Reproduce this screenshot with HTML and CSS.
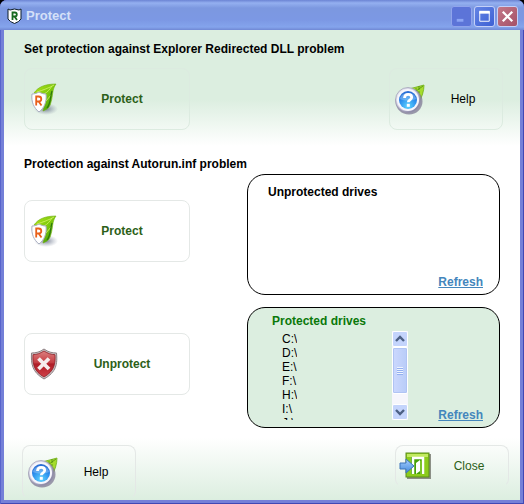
FILE: index.html
```html
<!DOCTYPE html>
<html lang="en">
<head>
  <meta charset="UTF-8">
  <title>Protect</title>
  <meta name="viewport" content="width=device-width, initial-scale=1.0">
  <link rel="stylesheet" href="styles.css">
</head>
<body>
  <!-- shared icons -->
  <svg class="sprite" aria-hidden="true">
    <defs>
      <linearGradient id="leaf" x1="0" y1="0" x2="1" y2="1">
        <stop offset="0" stop-color="#b4e61e"/>
        <stop offset="0.5" stop-color="#7cc80c"/>
        <stop offset="1" stop-color="#2f8a08"/>
      </linearGradient>
      <linearGradient id="ring" x1="0" y1="0" x2="1" y2="1">
        <stop offset="0" stop-color="#f4f4fb"/>
        <stop offset="0.5" stop-color="#c3c2d8"/>
        <stop offset="1" stop-color="#6f6a8c"/>
      </linearGradient>
      <radialGradient id="ball" cx="0.5" cy="0.85" r="0.85">
        <stop offset="0" stop-color="#5cd4ff"/>
        <stop offset="0.6" stop-color="#2a8cec"/>
        <stop offset="1" stop-color="#2a68d0"/>
      </radialGradient>
      <radialGradient id="shade">
        <stop offset="0" stop-color="#5f6a80" stop-opacity="0.8"/>
        <stop offset="1" stop-color="#8a94a8" stop-opacity="0"/>
      </radialGradient>
      <linearGradient id="red" x1="0" y1="0" x2="0" y2="1">
        <stop offset="0" stop-color="#dc8080"/>
        <stop offset="0.45" stop-color="#c43c42"/>
        <stop offset="0.5" stop-color="#ae1c26"/>
        <stop offset="1" stop-color="#cf4048"/>
      </linearGradient>
      <linearGradient id="arrow" x1="0" y1="0" x2="0" y2="1">
        <stop offset="0" stop-color="#a8d0ff"/>
        <stop offset="1" stop-color="#4288dc"/>
      </linearGradient>
    </defs>
    <symbol id="icon-protect" viewBox="0 0 32 36">
      <ellipse cx="17" cy="28" rx="12" ry="6" fill="url(#shade)"/>
      <path d="M5 12C9 6 16 3 27 3c-4 5-3 12-5 18-1 5-3 7-8 9 2-6 2-10 0-16z" fill="url(#leaf)" stroke="#6fac12" stroke-width="0.6"/>
      <path d="M8 11C14 9 20 7 25 4M15 13c4-2 6-5 8-8M17 20l5-6" stroke="#d5f26a" stroke-width="0.8" fill="none"/>
      <path d="M18 27c4-5 3-11 5-17" stroke="#2b780c" stroke-width="1.200" fill="none"/>
      <path d="M3 13c3 0 5-1 7-2 2 1 4 2 7 2 1 8-2 14-7 18-5-4-8-10-7-18z" fill="#fff" stroke="#a9aec0" stroke-width="1"/>
      <path d="M7.200 24.500v-9h2.300q2.800 0 2.800 2.500t-2.800 2.500H7.200M9.700 20.500l2.800 4" fill="none" stroke="#e8601a" stroke-width="1.800"/>
    </symbol>
    <symbol id="icon-help" viewBox="0 0 32 36">
      <path d="M15 8L30 4c0 6-2 12-5 17z" fill="#a5dc2c" stroke="#6fae18" stroke-width="0.8"/>
      <path d="M18 13L29 5M22 7v4h4M25 5v4" stroke="#4f8d10" stroke-width="0.8" fill="none"/>
      <ellipse cx="15" cy="20.500" rx="13.500" ry="13" fill="#77708f" opacity="0.7"/>
      <circle cx="14" cy="19" r="12.500" fill="url(#ring)" stroke="#8e8ba8" stroke-width="0.6"/>
      <circle cx="14" cy="19" r="11" fill="#f6f6fc"/>
      <circle cx="14" cy="19" r="9" fill="url(#ball)"/>
      <path d="M6 18c1-8 15-8 16 0-5 2-11 2-16 0z" fill="#fff" opacity="0.25"/>
      <path d="M10.500 17q.2-3.700 3.700-3.700t3.500 3q0 1.700-1.800 2.700-1.600.8-1.600 2.300" fill="none" stroke="#fff" stroke-width="2.800"/>
      <rect x="12.800" y="22.800" width="3" height="3" fill="#fff"/>
    </symbol>
    <symbol id="icon-unprotect" viewBox="0 0 32 36">
      <path d="M15 3c4 3 8 4 12.500 4 1 11 0 19-12.500 26C3 26 2 18 2.500 7 7 7 11 6 15 3z" fill="#c9c4c6" stroke="#8d7f82" stroke-width="1"/>
      <path d="M15 5c4 2.500 7 3.500 11 3.700.6 9.300-.8 16.500-11 22.300C4.800 25.200 3.500 18 4 8.700 8 8.500 11 7.500 15 5z" fill="url(#red)" stroke="#8f1a22" stroke-width="0.8"/>
      <path d="M9.500 12.500l10.500 10.500M20 12.500L9.500 23" stroke="#f6eeee" stroke-width="3.800"/>
    </symbol>
    <symbol id="icon-close" viewBox="0 0 36 32">
      <rect x="9" y="4" width="24" height="25" fill="#73756c" opacity="0.8"/>
      <rect x="8" y="3" width="23" height="24" fill="#8ccc1c" stroke="#5b8c1c" stroke-width="1"/>
      <path d="M9 4h21v3H9z" fill="#c2ea60"/>
      <path d="M13 7h13v17H13z" fill="#45a008"/>
      <path d="M15 24V8h10v16" fill="none" stroke="#fff" stroke-width="2.500"/>
      <path d="M18 13l4-3v11l-4 3z" fill="#fff"/>
      <path d="M22 11v13h2V10z" fill="#7cc42c"/>
      <path d="M2 13h6V9l8 7-8 7v-4H2z" fill="url(#arrow)" stroke="#3e74bc" stroke-width="1"/>
    </symbol>
  </svg>

  <div class="window">
    <header class="titlebar">
      <svg class="app-icon" viewBox="0 0 15 16" aria-hidden="true">
        <path d="M1 1l2 1 4.500-1L12 2l2-1v10q-2 3-6.500 4.500Q3 14 1 11z" fill="#fff" stroke="#0c1c28" stroke-width="1"/>
        <path d="M5.500 12V4.500h2.300q2 0 2 2t-2 2H5.500M7.500 8.500l2.500 3.500" fill="none" stroke="#176a20" stroke-width="1.800"/>
      </svg>
      <h1>Protect</h1>
      <div class="controls">
        <button class="ctl minimize" aria-label="Minimize" disabled>
          <svg viewBox="0 0 20 20"><path d="M5 14h7" stroke="#8ba4f4" stroke-width="3"/></svg>
        </button>
        <button class="ctl" aria-label="Maximize">
          <svg viewBox="0 0 20 20"><path d="M5 5h10v10H5z" fill="none" stroke="#fff"/><path d="M4.500 5.500h11" stroke="#fff" stroke-width="3"/></svg>
        </button>
        <button class="ctl exit" aria-label="Close window">
          <svg viewBox="0 0 20 20"><path d="M5 5l10 10M15 5L5 15" stroke="#fff" stroke-width="2.400"/></svg>
        </button>
      </div>
    </header>

    <main>
      <section class="redirect">
        <h2>Set protection against Explorer Redirected DLL problem</h2>
        <div class="row">
          <button class="btn wide soft"><svg class="icon"><use href="#icon-protect"/></svg><span>Protect</span></button>
          <button class="btn soft"><svg class="icon"><use href="#icon-help"/></svg><span>Help</span></button>
        </div>
      </section>

      <section class="autorun">
        <div class="actions">
          <h2>Protection against Autorun.inf problem</h2>
          <button class="btn wide"><svg class="icon"><use href="#icon-protect"/></svg><span>Protect</span></button>
          <button class="btn wide unprotect"><svg class="icon"><use href="#icon-unprotect"/></svg><span>Unprotect</span></button>
        </div>
        <div class="panels">
          <div class="panel">
            <h3>Unprotected drives</h3>
            <a class="refresh" href="#">Refresh</a>
          </div>
          <div class="panel protected">
            <h3>Protected drives</h3>
            <div class="drives">
              <ul>
                <li>C:\</li>
                <li>D:\</li>
                <li>E:\</li>
                <li>F:\</li>
                <li>H:\</li>
                <li>I:\</li>
                <li>J:\</li>
              </ul>
              <div class="scrollbar">
                <button class="arrow" aria-label="Scroll up"><svg viewBox="0 0 14 14"><path d="M3 9l4-4 4 4" fill="none" stroke="#4d6185" stroke-width="2.400"/></svg></button>
                <div class="track"><div class="thumb"></div></div>
                <button class="arrow" aria-label="Scroll down"><svg viewBox="0 0 14 14"><path d="M3 5l4 4 4-4" fill="none" stroke="#4d6185" stroke-width="2.400"/></svg></button>
              </div>
            </div>
            <a class="refresh" href="#">Refresh</a>
          </div>
        </div>
      </section>

      <footer>
        <button class="btn"><svg class="icon"><use href="#icon-help"/></svg><span>Help</span></button>
        <button class="btn close"><svg class="icon"><use href="#icon-close"/></svg><span>Close</span></button>
      </footer>
    </main>
  </div>
</body>
</html>
```

FILE: styles.css
```css
:root {
  --mint: #dceee0;
  --frame: #7480d8;
  --green: #2c6018;
  --link: #4486bc;
  --line: #e4e8e6;
}

* {
  box-sizing: border-box;
}

body {
  margin: 0;
  background: #000;
  font-family: "Liberation Sans", Arial, sans-serif;
  font-size: 12px;
  line-height: 14px;
  color: #000;
}

h1, h2, h3, ul {
  margin: 0;
  padding: 0;
}

button {
  font: inherit;
  padding: 0;
  cursor: pointer;
}

.sprite {
  position: absolute;
  width: 0;
  height: 0;
}

.window {
  display: flex;
  flex-direction: column;
  height: 100vh;
  padding: 0 4px 4px;
  background: var(--frame);
  border-radius: 7px 7px 0 0;
  box-shadow: inset 1px 0 #5864cc, inset -1px -1px #4048b4;
  overflow: hidden;
}

/* title bar */
.titlebar {
  display: flex;
  align-items: center;
  flex: none;
  height: 30px;
  margin: 0 -4px;
  padding: 2px 6px 0 7px;
  background: linear-gradient(#6c84d4, #94b0f0 3px, #7c98e0 8px, #7c98e4 20px, #84a4ec 27px, #7088d4);
}

.app-icon {
  width: 15px;
  height: 16px;
}

h1 {
  flex: 1;
  margin-left: 4px;
  font-size: 13px;
  line-height: 14px;
  color: #d4e0f8;
}

.controls {
  display: flex;
  gap: 2px;
}

.ctl {
  width: 21px;
  height: 21px;
  border: 1px solid #c4d0f8;
  border-radius: 3px;
  background: linear-gradient(135deg, #6484e4, #3c60d4);
}

.ctl svg {
  display: block;
  width: 100%;
  height: 100%;
}

.ctl.minimize {
  border-color: #90a4ec;
  background: #5c74d8;
}

.ctl.exit {
  background: linear-gradient(135deg, #c47888, #a45068);
}

/* content */
main {
  flex: 1;
  display: flex;
  flex-direction: column;
  min-height: 0;
  background: #fff;
}

h2, h3 {
  font-size: 12px;
  line-height: 14px;
  font-weight: bold;
}

.redirect {
  padding: 12px 17px 16px 20px;
  background: linear-gradient(var(--mint) 60%, #fff);
}

.row {
  display: flex;
  justify-content: space-between;
  margin-top: 12px;
}

.btn {
  display: flex;
  align-items: center;
  width: 114px;
  height: 62px;
  padding: 0 2px 0 4px;
  border: 1px solid var(--line);
  border-radius: 8px;
  background: none;
  color: #000;
}

.btn.wide {
  width: 166px;
  padding-right: 6px;
  color: var(--green);
  font-weight: bold;
}

.btn.soft {
  border-color: #dcebe0;
}

.btn span {
  flex: 1;
  text-align: center;
}

.icon {
  flex: none;
  width: 32px;
  height: 36px;
}

.autorun {
  display: flex;
  justify-content: space-between;
  padding: 11px 20px 0;
}

/* the heading may run on above the panels */
.actions {
  width: 166px;
}

.actions h2 {
  white-space: nowrap;
}

.actions .btn {
  margin-top: 29px;
}

.actions .unprotect {
  margin-top: 71px;
}

.panels {
  display: flex;
  flex-direction: column;
  gap: 12px;
  padding-top: 17px;
}

.panel {
  display: flex;
  flex-direction: column;
  width: 253px;
  height: 121px;
  padding: 10px 16px 5px 20px;
  border: 1px solid #000;
  border-radius: 18px;
}

.panel.protected {
  padding: 6px 16px 5px 24px;
  background: var(--mint);
}

.protected h3 {
  color: #0a780a;
}

.refresh {
  align-self: flex-end;
  margin-top: auto;
  color: var(--link);
  font-weight: bold;
}

.drives {
  display: flex;
  justify-content: space-between;
  width: 126px;
  height: 89px;
  margin: 3px 0 -15px 10px;
}

.drives ul {
  padding-top: 1px;
  overflow: hidden;
  list-style: none;
}

.scrollbar {
  display: flex;
  flex-direction: column;
  width: 16px;
  background: #f6f6fc;
}

.arrow {
  flex: none;
  width: 16px;
  height: 16px;
  border: 1px solid #fff;
  border-radius: 2px;
  background: #c4d4fc;
}

.arrow svg {
  display: block;
}

.track {
  flex: 1;
}

.thumb {
  height: 47px;
  border: 1px solid #fff;
  border-radius: 2px;
  background:
    repeating-linear-gradient(#eef4fe 0 1px, #94b0f0 1px 2px) center / 6px 8px no-repeat,
    linear-gradient(90deg, #ccd8fe, #b8ccf8);
  box-shadow: inset 0 0 0 1px #b0c4f4;
}

footer {
  flex: 1;
  display: flex;
  justify-content: space-between;
  align-items: flex-start;
  min-height: 0;
  margin-top: 10px;
  padding: 7px 11px 0 18px;
  background: linear-gradient(#fff, var(--mint));
  overflow: hidden;
}

footer .btn {
  height: 54px;
  border-bottom-color: transparent;
}

footer .close {
  height: 42px;
  padding: 0 4px 0 2px;
  color: var(--green);
}

.close .icon {
  width: 36px;
  height: 32px;
}
```
